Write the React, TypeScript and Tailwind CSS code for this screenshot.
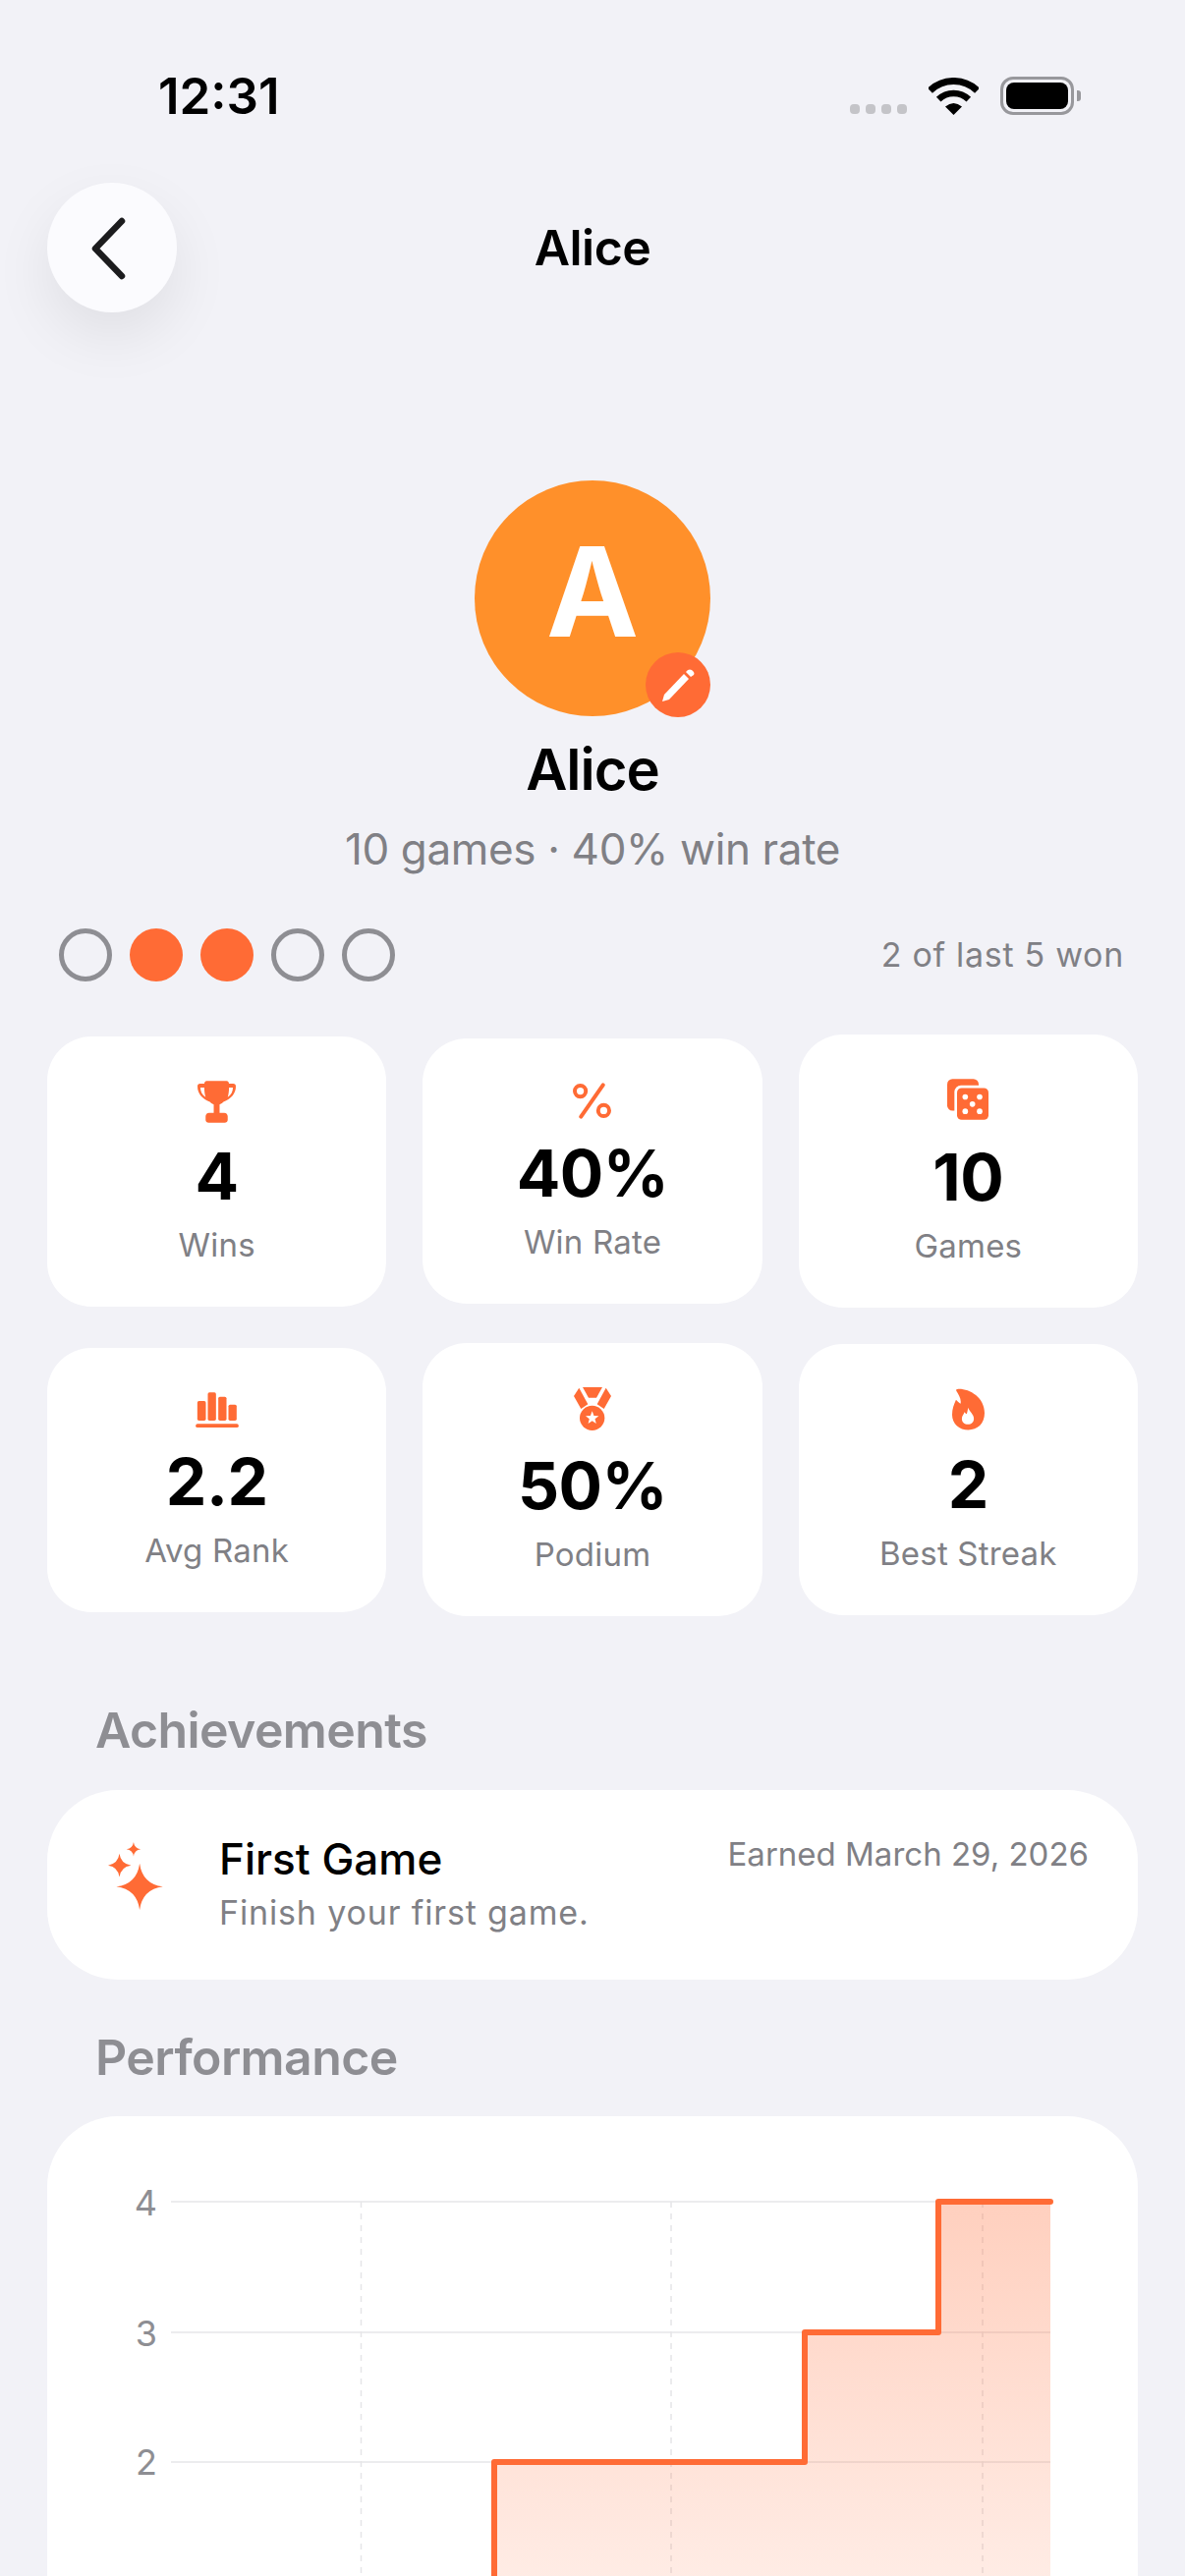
import type { ReactNode } from 'react';

const ORANGE = '#FF6B35';

function star(cx: number, cy: number, r: number) {
  const k = r * 0.12;
  return `M${cx} ${cy - r}Q${cx + k} ${cy - k} ${cx + r} ${cy}Q${cx + k} ${cy + k} ${cx} ${cy + r}Q${cx - k} ${cy + k} ${cx - r} ${cy}Q${cx - k} ${cy - k} ${cx} ${cy - r}Z`;
}

function TrophyIcon() {
  return (
    <svg viewBox="0 0 118 128" className="w-[39px] h-[43px]" fill={ORANGE}>
      <path
        fillRule="evenodd"
        d="M28 0H90C94 0 96 3 97 8H110C115 8 118 11 118 16C118 38 104 54 80 64C76 68 71 71 68 72V98H82C89 98 93 103 93 109V120C93 125 89 128 84 128H34C29 128 25 125 25 120V109C25 103 29 98 36 98H50V72C47 71 42 68 38 64C14 54 0 38 0 16C0 11 3 8 8 8H21C22 3 24 0 28 0ZM9 20C9 32 14 42 25 50C22 40 21 30 21 20ZM109 20C109 32 104 42 93 50C96 40 97 30 97 20Z"
      />
    </svg>
  );
}

function PercentIcon() {
  return (
    <svg viewBox="0 0 118 110" className="w-[39px] h-[37px]" fill="none" stroke={ORANGE} strokeWidth="12" strokeLinecap="round">
      <circle cx="23" cy="25" r="17" />
      <circle cx="95" cy="85" r="17" />
      <path d="M93 6L25 104" />
    </svg>
  );
}

function DiceIcon() {
  return (
    <svg viewBox="0 0 126 125" className="w-[42px] h-[42px]">
      <rect x="0" y="0" width="96" height="97" rx="16" fill={ORANGE} />
      <rect x="22" y="20" width="112" height="113" rx="20" fill="#fff" />
      <rect x="30" y="28" width="96" height="97" rx="14" fill={ORANGE} />
      {[[55, 55], [99, 55], [77, 77], [55, 99], [99, 99]].map(([cx, cy]) => (
        <circle key={`${cx}-${cy}`} cx={cx} cy={cy} r="8.5" fill="#fff" />
      ))}
    </svg>
  );
}

function BarsIcon() {
  return (
    <svg viewBox="0 0 131 108" className="w-[44px] h-[36px]" fill={ORANGE}>
      <rect x="5" y="27" width="26" height="60" rx="5" />
      <rect x="37" y="1" width="25" height="86" rx="5" />
      <rect x="69" y="14" width="25" height="73" rx="5" />
      <rect x="100" y="38" width="25" height="49" rx="5" />
      <rect x="0" y="97" width="131" height="11" rx="5.5" />
    </svg>
  );
}

function MedalIcon() {
  return (
    <svg viewBox="0 0 114 132" className="w-[38px] h-[44px]" fill={ORANGE}>
      <polygon points="27,0 87,0 69,32 45,32" />
      <polygon points="0,27 16,2 43,52 22,66" />
      <polygon points="114,27 98,2 71,52 92,66" />
      <circle cx="56" cy="94" r="38" />
      <polygon
        fill="#fff"
        points="56,73 61.3,86.7 76,87.5 64.6,96.8 68.3,111 56,103 43.7,111 47.4,96.8 36,87.5 50.7,86.7"
      />
    </svg>
  );
}

function FlameIcon() {
  return (
    <svg viewBox="0 0 100 127" className="w-[33px] h-[43px]">
      <path
        fill={ORANGE}
        d="M16 1C50 -2 100 25 100 75C100 108 78 127 50 127C22 127 0 108 0 80C0 62 6 48 12 34C17 40 21 43 26 46C29 32 20 18 13 7C12 4 13 1 16 1Z"
      />
      <path
        fill="#fff"
        d="M50 58C52 70 67 78 67 92C67 103 59 110 49 110C38 110 30 103 30 92C30 84 36 80 38 72C41 76 43 78 45 78C47 72 48 64 50 58Z"
      />
    </svg>
  );
}

function WifiIcon() {
  return (
    <svg viewBox="0 0 51 38" className="w-[51px] h-[38px]" fill="none" stroke="#000">
      <path d="M1.5 13.2A34.5 34.5 0 0 1 49.5 13.2" strokeWidth="7" />
      <path d="M10.2 22.2A22 22 0 0 1 40.8 22.2" strokeWidth="6.5" />
      <path d="M25.5 38L17 29.5Q25.5 22.5 34 29.5Z" fill="#000" stroke="none" />
    </svg>
  );
}

const stats: { label: string; value: string; box: string; icon: ReactNode }[] = [
  { label: 'Wins', value: '4', box: 'h-[43px]', icon: <TrophyIcon /> },
  { label: 'Win Rate', value: '40%', box: 'h-[38px]', icon: <PercentIcon /> },
  { label: 'Games', value: '10', box: 'h-[46px]', icon: <DiceIcon /> },
  { label: 'Avg Rank', value: '2.2', box: 'h-[37px]', icon: <BarsIcon /> },
  { label: 'Podium', value: '50%', box: 'h-[46px]', icon: <MedalIcon /> },
  { label: 'Best Streak', value: '2', box: 'h-[44px]', icon: <FlameIcon /> },
];

function StatCard({ label, value, box, icon }: { label: string; value: string; box: string; icon: ReactNode }) {
  return (
    <div className="bg-white rounded-[45px] pt-[45px] pb-[43px] flex flex-col items-center">
      <div className={`${box} flex justify-center items-start`}>{icon}</div>
      <div className="mt-[21px] text-[66px] leading-[66px] font-bold tracking-[-0.5px] text-black">{value}</div>
      <div className="mt-[17px] text-[33px] leading-[40px] tracking-[0.2px] text-[#808085]">{label}</div>
    </div>
  );
}

function PerformanceChart() {
  return (
    <svg viewBox="0 0 1110 700" className="block w-[1110px] h-[700px]">
      <defs>
        <linearGradient id="area" gradientUnits="userSpaceOnUse" x1="0" y1="87" x2="0" y2="730">
          <stop offset="0" stopColor={ORANGE} stopOpacity="0.32" />
          <stop offset="1" stopColor={ORANGE} stopOpacity="0" />
        </linearGradient>
      </defs>
      {[87, 220, 352, 485].map((y) => (
        <line key={y} x1="126" x2="1021" y1={y} y2={y} stroke="#e6e6e8" strokeWidth="1.5" />
      ))}
      {[319.5, 635, 952].map((x) => (
        <line key={x} x1={x} x2={x} y1="87" y2="700" stroke="#e5e5e8" strokeWidth="1.5" strokeDasharray="6 6" />
      ))}
      <path d="M455 700V352H771V220H907V87H1021V700Z" fill="url(#area)" />
      <path
        d="M455 700V352H771V220H907V87H1021"
        fill="none"
        stroke={ORANGE}
        strokeWidth="6"
        strokeLinejoin="round"
        strokeLinecap="round"
      />
      {[['4', 101], ['3', 234], ['2', 365]].map(([t, y]) => (
        <text key={t} x="112" y={y} textAnchor="end" fontSize="36" fill="#8e8e93">
          {t}
        </text>
      ))}
    </svg>
  );
}

export default function App() {
  return (
    <div className="w-[1206px] h-[2622px] overflow-hidden bg-[#f2f2f7] font-[Inter,sans-serif] text-black">
      {/* status bar */}
      <div className="pt-[72px] pl-[161px] pr-[106px] flex items-center justify-between h-[123px]">
        <span className="text-[51px] leading-[51px] font-semibold">12:31</span>
        <div className="flex items-end h-[39px]">
          <div className="flex gap-[6px] mb-px mr-[22px]">
            {[0, 1, 2, 3].map((i) => (
              <div key={i} className="w-[10px] h-[10px] rounded-[4px] bg-[#c4c4c8]" />
            ))}
          </div>
          <WifiIcon />
          <div className="ml-[22px] w-[75px] h-[39px] rounded-[13px] border-[3px] border-[#98989c] p-[3px]">
            <div className="w-full h-full rounded-[8px] bg-black" />
          </div>
          <div className="ml-[3px] mb-[14px] w-[4px] h-[11px] rounded-r-[3px] bg-[#98989c]" />
        </div>
      </div>

      {/* nav */}
      <div className="mt-[63px] px-12 flex items-center">
        <button className="w-[132px] h-[132px] rounded-full bg-[#fbfbfe] shadow-[0_24px_60px_rgba(0,0,0,0.08)] flex items-center justify-center">
          <svg viewBox="0 0 132 132" className="w-[132px] h-[132px]" fill="none" stroke="#1c1c1e" strokeWidth="6.5" strokeLinecap="round" strokeLinejoin="round">
            <path d="M76 39L49 67L76 95" />
          </svg>
        </button>
        <div className="flex-1 text-center text-[50px] leading-[60px] font-semibold tracking-[-0.5px]">Alice</div>
        <div className="w-[132px]" />
      </div>

      {/* profile */}
      <div className="mt-[171px] flex flex-col items-center">
        <div className="relative w-[240px] h-[240px] pb-[14px] rounded-full bg-[#ff902a] flex items-center justify-center">
          <span className="text-[126px] leading-none font-bold text-white">A</span>
          <div className="absolute right-0 top-[175px] w-[66px] h-[66px] rounded-full bg-[#FF6B35] flex items-center justify-center">
            <svg viewBox="0 0 34 33" className="w-[34px] h-[33px]" fill="#fff">
              <path d="M1 33L3 26L23 5L28 10L8 31Z" />
              <path d="M25 3L27 1Q29 0 31 1L33 3Q34 5 33 6L30 8Z" />
            </svg>
          </div>
        </div>
        <div className="mt-[19px] text-[58px] leading-[70px] font-semibold tracking-[-1px]">Alice</div>
        <div className="mt-[19px] text-[44px] leading-[54px] tracking-[-0.35px] text-[#808085]">10 games · 40% win rate</div>
      </div>

      {/* recent form */}
      <div className="mt-[54px] pl-[60px] pr-[62px] flex items-center justify-between h-[54px]">
        <div className="flex gap-[18px]">
          {[false, true, true, false, false].map((won, i) =>
            won ? (
              <div key={i} className="w-[54px] h-[54px] rounded-full bg-[#FF6B35]" />
            ) : (
              <div key={i} className="w-[54px] h-[54px] rounded-full border-[5px] border-[#8e8e93]" />
            ),
          )}
        </div>
        <span className="text-[34px] leading-[40px] tracking-[0.7px] text-[#808085]">2 of last 5 won</span>
      </div>

      {/* stats */}
      <div className="mt-[54px] px-12 grid grid-cols-3 gap-x-[37px] gap-y-9 items-center">
        {stats.map((s) => (
          <StatCard key={s.label} {...s} />
        ))}
      </div>

      {/* achievements */}
      <div className="mt-[86px] ml-[97px] text-[50px] leading-[60px] font-semibold tracking-[-0.6px] text-[#8e8e93]">Achievements</div>
      <div className="mt-[31px] mx-12 h-[193px] bg-white rounded-[72px] pl-[62px] pr-[50px] flex items-center">
        <svg viewBox="0 0 54 67" className="w-[56px] h-[69px] shrink-0 mb-[18px]" fill={ORANGE}>
          <path d={star(31, 44, 23)} />
          <path d={star(11, 23, 11.5)} />
          <path d={star(25, 7, 7)} />
        </svg>
        <div className="ml-[57px] flex-1">
          <div className="text-[44px] leading-[52px] font-medium -mt-[3px]">First Game</div>
          <div className="mt-[8px] text-[34px] leading-[42px] tracking-[0.85px] text-[#808085]">Finish your first game.</div>
        </div>
        <span className="self-start mt-[45px] text-[33px] leading-[40px] text-[#808085]">Earned March 29, 2026</span>
      </div>

      {/* performance */}
      <div className="mt-[49px] ml-[97px] text-[50px] leading-[60px] font-semibold tracking-[-0.6px] text-[#8e8e93]">Performance</div>
      <div className="mt-[30px] mx-12 bg-white rounded-[72px]">
        <PerformanceChart />
      </div>
    </div>
  );
}
